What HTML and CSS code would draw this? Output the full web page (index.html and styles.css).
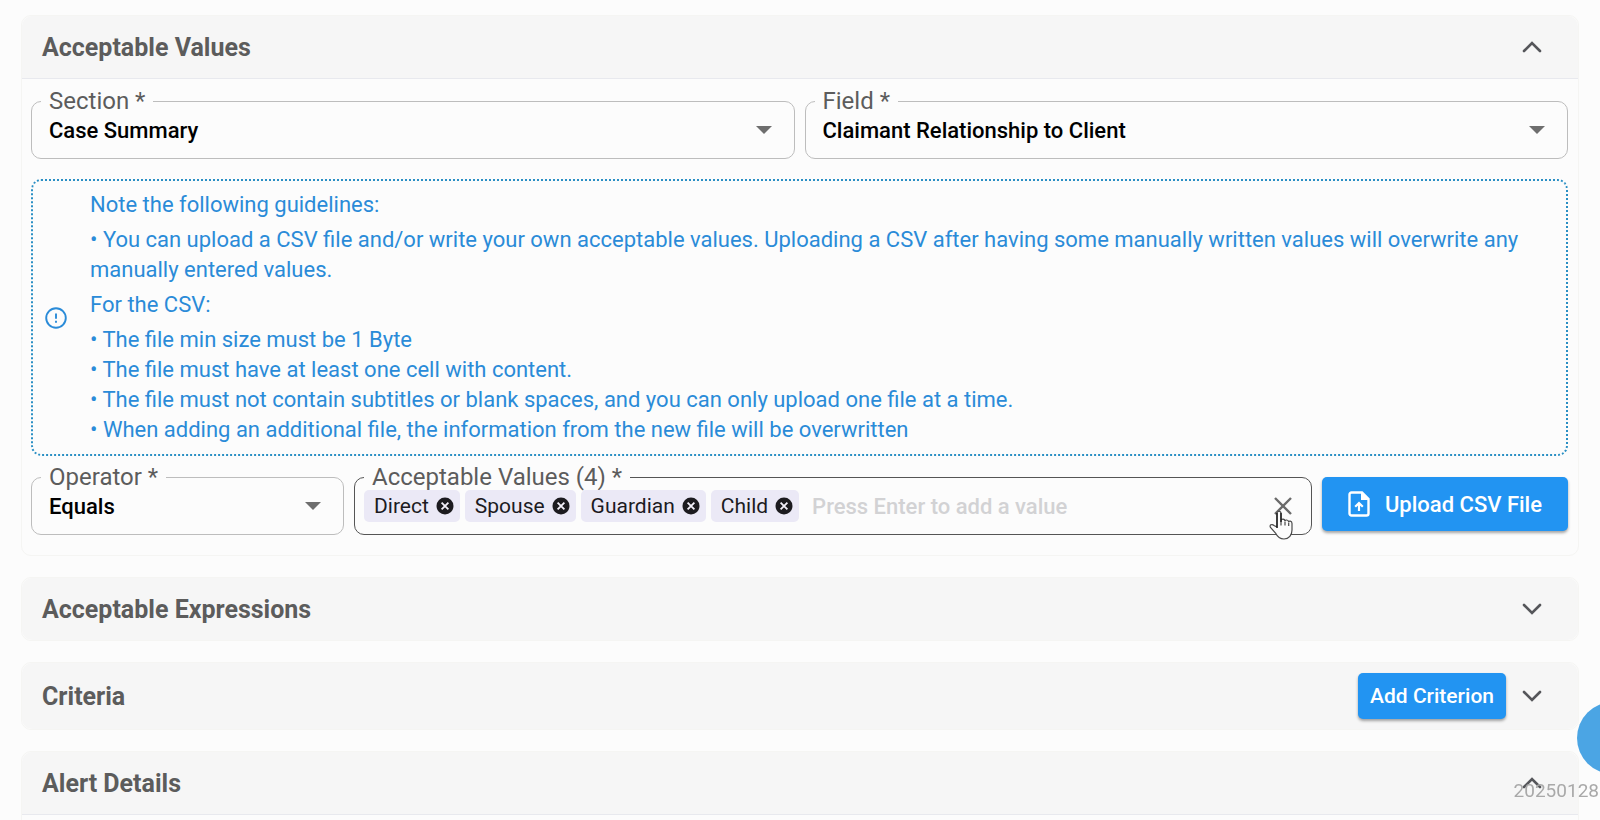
FILE: index.html
```html
<!DOCTYPE html>
<html lang="en">
<head>
<meta charset="utf-8">
<title>Acceptable Values</title>
<link rel="stylesheet" href="styles.css">
</head>
<body>
<svg class="defs" aria-hidden="true">
  <symbol id="chevron" viewBox="0 0 20 12"><path d="M2 2l8 8 8-8" fill="none" stroke="currentColor" stroke-width="2.6" stroke-linecap="round"/></symbol>
  <symbol id="caret" viewBox="0 0 16 8"><path d="M0 0h16L8 8z" fill="currentColor"/></symbol>
  <symbol id="remove" viewBox="0 0 18 18"><circle cx="9" cy="9" r="8.5" fill="#1c1b1f"/><path d="M5.6 5.6l6.8 6.8M12.4 5.6l-6.8 6.8" stroke="#f3f0fa" stroke-width="1.8"/></symbol>
</svg>
<main class="page">
  <section class="panel">
    <header class="panel-header">
      <h2>Acceptable Values</h2>
      <button class="toggle" type="button" aria-label="Collapse Acceptable Values"><svg class="chevron up"><use href="#chevron"/></svg></button>
    </header>
    <div class="panel-body">
      <div class="row halves">
        <fieldset class="field">
          <legend><label for="section">Section *</label></legend>
          <div class="select-box">
            <select id="section"><option>Case Summary</option></select>
            <svg class="caret"><use href="#caret"/></svg>
          </div>
        </fieldset>
        <fieldset class="field">
          <legend><label for="field">Field *</label></legend>
          <div class="select-box">
            <select id="field"><option>Claimant Relationship to Client</option></select>
            <svg class="caret"><use href="#caret"/></svg>
          </div>
        </fieldset>
      </div>
      <div class="notice">
        <svg class="info" viewBox="0 0 22 22"><circle cx="11" cy="11" r="9.8" fill="none" stroke="currentColor" stroke-width="1.9"/><path d="M11 6.4v5.4M11 13.8v2" stroke="currentColor" stroke-width="1.9"/></svg>
        <div class="notice-text">
          <p>Note the following guidelines:</p>
          <p>• You can upload a CSV file and/or write your own acceptable values. Uploading a CSV after having some manually written values will overwrite any manually entered values.</p>
          <p>For the CSV:</p>
          <p>• The file min size must be 1 Byte<br>• The file must have at least one cell with content.<br>• The file must not contain subtitles or blank spaces, and you can only upload one file at a time.<br>• When adding an additional file, the information from the new file will be overwritten</p>
        </div>
      </div>
      <div class="row values">
        <fieldset class="field">
          <legend><label for="operator">Operator *</label></legend>
          <div class="select-box">
            <select id="operator"><option>Equals</option></select>
            <svg class="caret"><use href="#caret"/></svg>
          </div>
        </fieldset>
        <fieldset class="field active">
          <legend><label for="values">Acceptable Values (4) *</label></legend>
          <div class="chips">
            <span class="chip">Direct<button type="button" aria-label="Remove Direct"><svg><use href="#remove"/></svg></button></span>
            <span class="chip">Spouse<button type="button" aria-label="Remove Spouse"><svg><use href="#remove"/></svg></button></span>
            <span class="chip">Guardian<button type="button" aria-label="Remove Guardian"><svg><use href="#remove"/></svg></button></span>
            <span class="chip">Child<button type="button" aria-label="Remove Child"><svg><use href="#remove"/></svg></button></span>
            <input id="values" type="text" placeholder="Press Enter to add a value">
            <button class="clear" type="button" aria-label="Clear all values">
              <svg class="cross" viewBox="0 0 18 18"><path d="M1 1l16 16M17 1L1 17" stroke="#6b6b6b" stroke-width="2.4"/></svg>
              <svg class="pointer" viewBox="0 0 24 30"><path d="M8 17V3.5C8 .5 12 .5 12 3.5V11c0-2.6 4-2.6 4 .5 0-2.200 3.700-2.100 3.700.9 0-2 3.300-1.700 3.300 1V20c0 5-3 9-8 9-4.500 0-6.500-2-8.500-6L1.500 17.500C0 15 3 13.500 5 15.500z" fill="#fcfcfc" stroke="#4a4a4a" stroke-width="1.2"/><path d="M12 11v4.500M16 12v3.500M19.700 13v3" stroke="#4a4a4a" stroke-width="1.2"/><path d="M8 3v15M12 3v9" stroke="#111" stroke-width="1.3"/></svg>
            </button>
          </div>
        </fieldset>
        <button class="primary upload" type="button">
          <svg class="file" viewBox="0 0 22 26"><path d="M3.500 1.500H14L20.500 8v14.500a2 2 0 0 1-2 2h-15a2 2 0 0 1-2-2v-19a2 2 0 0 1 2-2z" fill="none" stroke="#fff" stroke-width="2.4"/><path d="M13 1.500V9h7.500L14 1.500z" fill="#fff"/><path d="M11 20v-7M7.200 15.800L11 12l3.800 3.800" fill="none" stroke="#fff" stroke-width="2.2"/></svg>
          Upload CSV File
        </button>
      </div>
    </div>
  </section>

  <section class="panel">
    <header class="panel-header">
      <h2>Acceptable Expressions</h2>
      <button class="toggle" type="button" aria-label="Expand Acceptable Expressions"><svg class="chevron"><use href="#chevron"/></svg></button>
    </header>
  </section>

  <section class="panel">
    <header class="panel-header with-action">
      <h2>Criteria</h2>
      <button class="primary" type="button">Add Criterion</button>
      <button class="toggle" type="button" aria-label="Expand Criteria"><svg class="chevron"><use href="#chevron"/></svg></button>
    </header>
  </section>

  <section class="panel">
    <header class="panel-header">
      <h2>Alert Details</h2>
      <button class="toggle" type="button" aria-label="Collapse Alert Details"><svg class="chevron up"><use href="#chevron"/></svg></button>
    </header>
    <div class="panel-body"></div>
  </section>
</main>
<button class="bubble" type="button" aria-label="Help"></button>
<div class="version">20250128</div>
</body>
</html>
```
FILE: styles.css
```css
* {
  box-sizing: border-box;
}

html,
body {
  height: 100%;
}

body {
  margin: 0;
  overflow: hidden;
  background: #fcfcfc;
  font-family: Roboto, "Liberation Sans", sans-serif;
  font-size: 22px;
  color: #111;
}

button,
input,
select {
  font: inherit;
}

button {
  border: 0;
  padding: 0;
  background: none;
  cursor: pointer;
}

svg {
  display: block;
}

.defs {
  display: none;
}

.page {
  display: flex;
  flex-direction: column;
  gap: 21px;
  padding: 15px 21px;
}

.panel {
  border: 1px solid #f5f5f3;
  border-radius: 10px;
}

.panel-header {
  display: flex;
  align-items: center;
  min-height: 62px;
  padding: 0 36px 0 20px;
  border-radius: 10px;
  background: #f6f6f6;
}

.panel-header:not(:last-child) {
  min-height: 63px;
  border-bottom: 1px solid #e8e9ee;
  border-radius: 10px 10px 0 0;
}

.panel-header.with-action {
  min-height: 66px;
}

.panel-header h2 {
  flex: 1;
  margin: 0;
  padding-top: 2px;
  font-size: 25px;
  font-weight: 700;
  line-height: 30px;
  color: #5c5c5c;
}

.toggle {
  margin-left: 16px;
  color: #55565a;
}

.chevron {
  width: 20px;
  height: 12px;
}

.up {
  transform: rotate(180deg);
}

.panel-body {
  padding: 10px 10px 20px 9px;
}

.row {
  display: grid;
  column-gap: 10px;
}

.halves {
  grid-template-columns: 1fr 1fr;
}

.values {
  grid-template-columns: 313px 1fr auto;
  margin-top: 9px;
}

.field {
  min-width: 0;
  margin: 0;
  padding: 0 19px 0 9px;
  border: 1px solid #bdbdbd;
  border-radius: 10px;
}

.field.active {
  border-color: #555;
}

.field legend {
  padding: 0 8px;
  font-size: 24px;
  line-height: 24px;
  color: #5c5c5c;
}

.select-box {
  display: grid;
  align-items: center;
  padding-bottom: 11px;
}

.select-box > * {
  grid-area: 1 / 1;
}

.select-box select {
  width: 100%;
  height: 34px;
  padding: 0 30px 0 8px;
  border: 0;
  appearance: none;
  background: none;
  font-weight: 500;
  color: #000;
}

.caret {
  justify-self: end;
  width: 16px;
  height: 8px;
  margin-right: 3px;
  color: #6e6e6e;
  pointer-events: none;
}

.notice {
  display: flex;
  align-items: center;
  gap: 23px;
  margin-top: 20px;
  padding: 9px 20px 9px 12px;
  border: 2px dotted #2a8fc4;
  border-radius: 10px;
  color: #2a8bd8;
}

.info {
  flex: none;
  width: 22px;
  height: 22px;
}

.notice-text {
  display: grid;
  gap: 5px;
}

.notice-text p {
  margin: 0;
  line-height: 30px;
}

.chips {
  display: flex;
  align-items: center;
  gap: 5px;
  padding-bottom: 11px;
}

.chip {
  display: flex;
  align-items: center;
  gap: 7px;
  height: 32px;
  padding: 0 6px 0 10px;
  border-radius: 5px;
  background: #ebe9f6;
  font-size: 21px;
  color: #1c1b1f;
}

.chip svg {
  width: 18px;
  height: 18px;
}

.chips input {
  flex: 1;
  min-width: 0;
  height: 34px;
  padding: 0 8px;
  border: 0;
  outline: 0;
  background: none;
  font-weight: 500;
}

.chips input::placeholder {
  color: #d2d2d4;
  opacity: 1;
}

.clear {
  position: relative;
}

.cross {
  width: 18px;
  height: 18px;
}

.pointer {
  position: absolute;
  top: 13px;
  left: -5px;
  width: 24px;
  height: 30px;
}

.primary {
  height: 46px;
  padding: 0 12px;
  border-radius: 5px;
  background: #2294f2;
  box-shadow: 0 2px 3px rgba(0, 0, 0, 0.35);
  font-size: 21px;
  font-weight: 500;
  color: #fff;
}

.upload {
  display: flex;
  align-items: center;
  gap: 15px;
  height: 54px;
  margin-top: 12px;
  padding: 0 26px;
  font-size: 22px;
}

.file {
  width: 22px;
  height: 26px;
}

.bubble {
  position: fixed;
  right: -49px;
  bottom: 46px;
  width: 72px;
  height: 72px;
  border-radius: 50%;
  background: #4ba5e4;
}

.version {
  position: fixed;
  right: 1px;
  bottom: 17px;
  font-size: 19px;
  line-height: 24px;
  color: #a9a9a9;
}
```
